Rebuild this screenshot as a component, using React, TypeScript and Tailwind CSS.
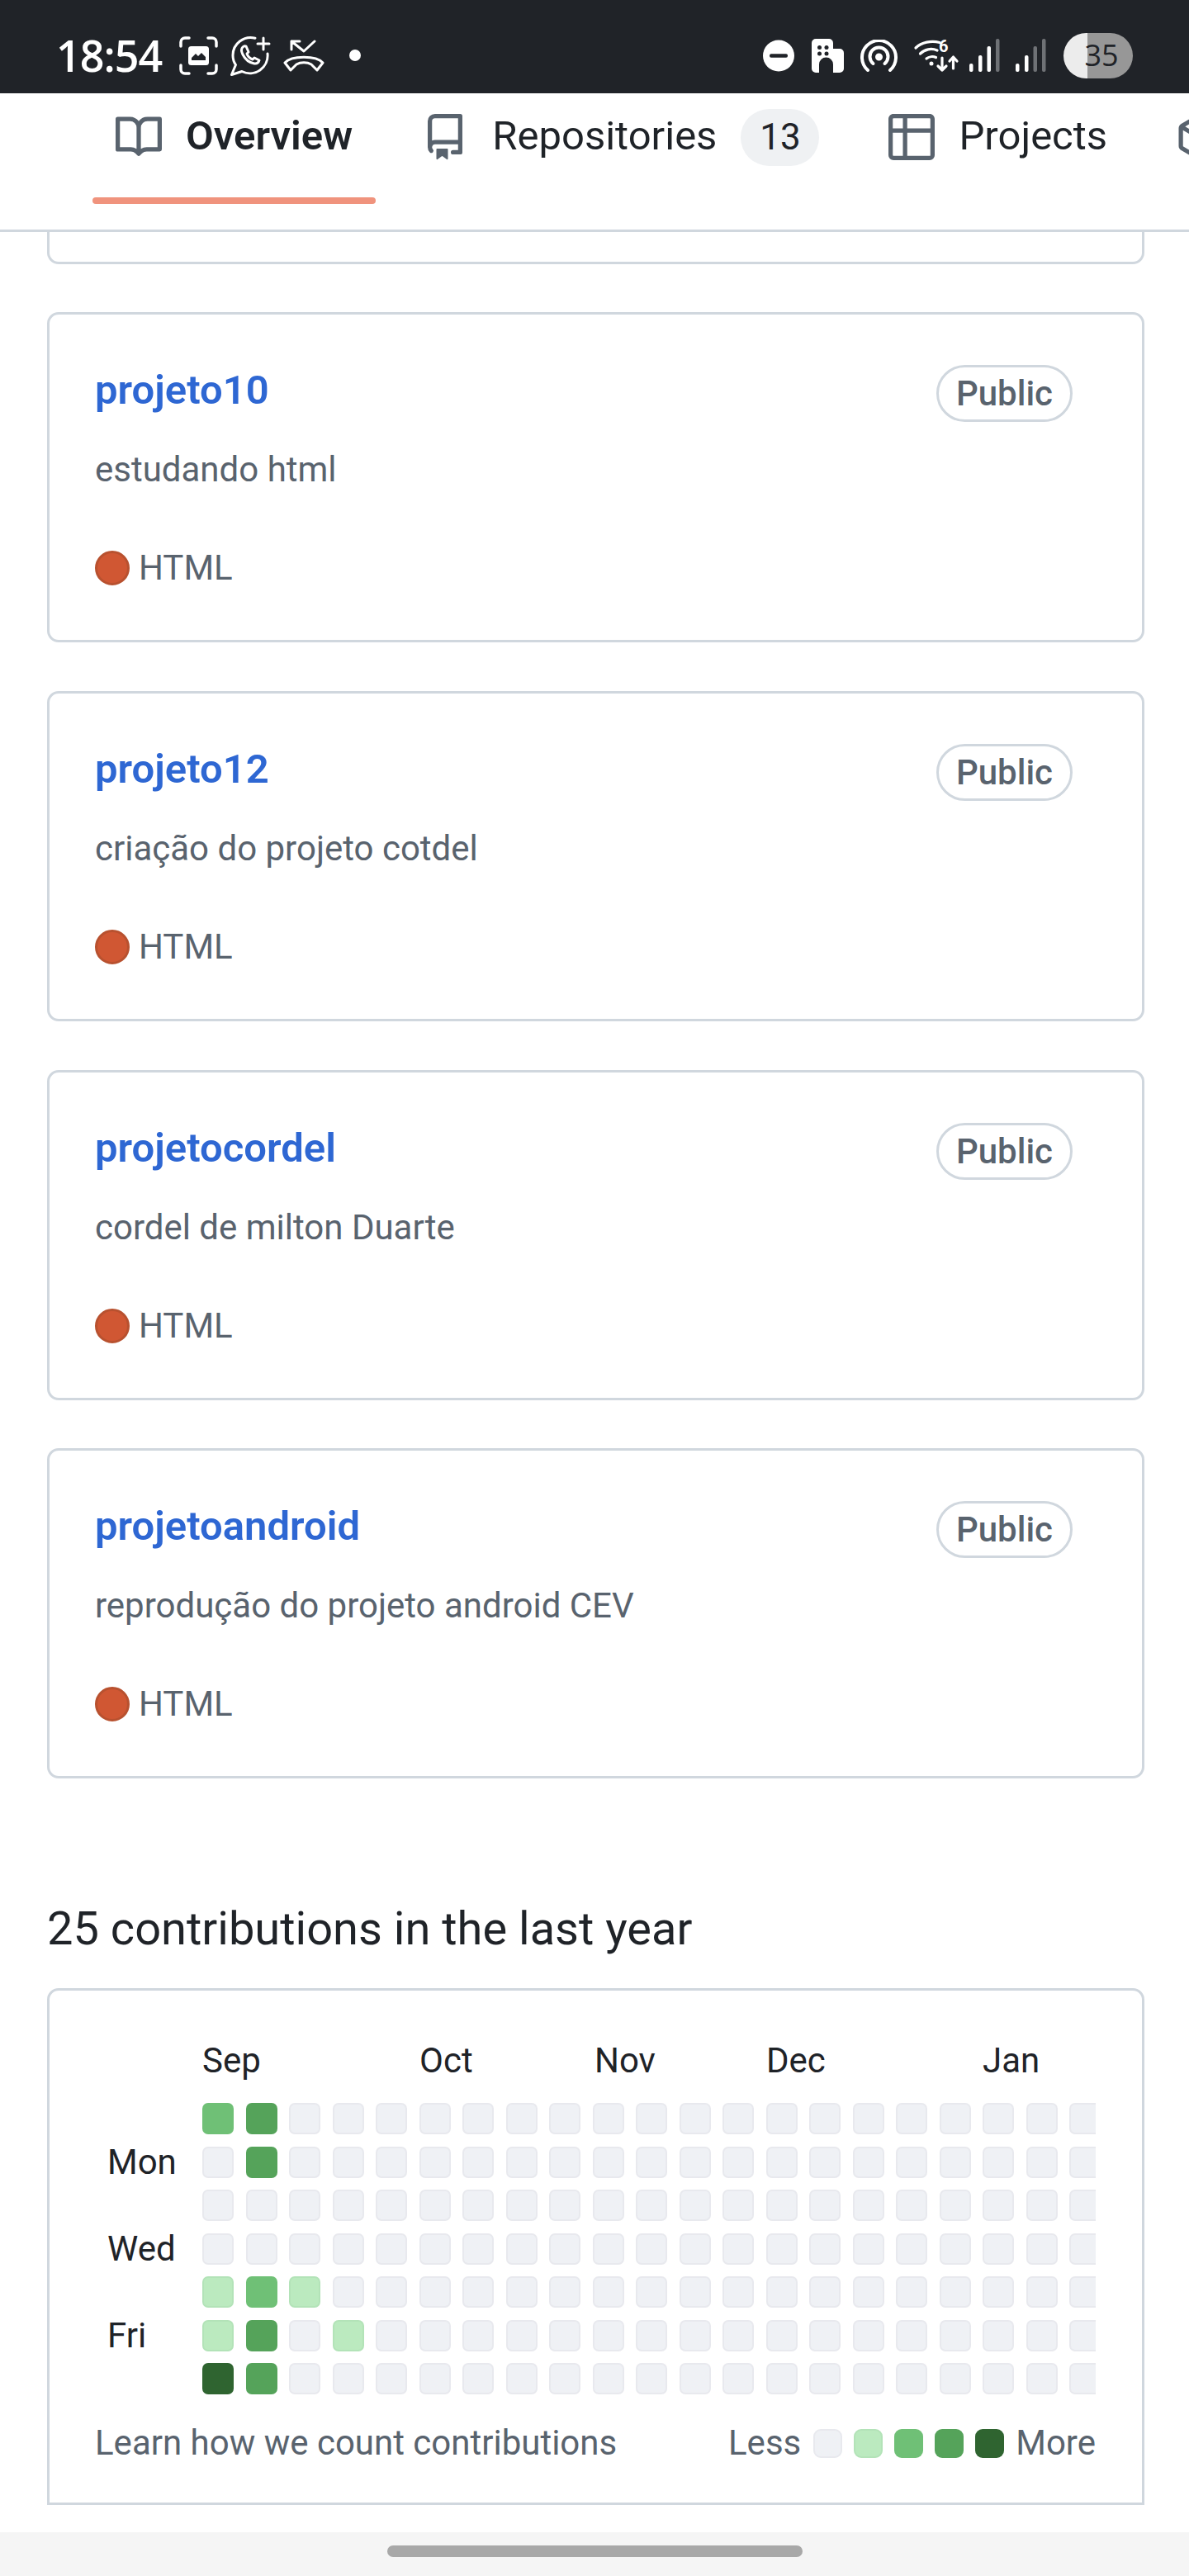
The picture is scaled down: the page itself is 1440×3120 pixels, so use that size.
import React from "react";

const FONT = "font-['Roboto','Liberation_Sans',sans-serif]";

const BookIcon = () => (
  <svg width="56" height="56" viewBox="0 0 16 16" fill="#59636e" className="shrink-0">
    <path d="M0 1.75A.75.75 0 0 1 .75 1h4.253c1.227 0 2.317.59 3 1.501A3.743 3.743 0 0 1 11.006 1h4.245a.75.75 0 0 1 .75.75v10.5a.75.75 0 0 1-.75.75h-4.507a2.25 2.25 0 0 0-1.591.659l-.622.621a.75.75 0 0 1-1.06 0l-.622-.621A2.25 2.25 0 0 0 5.258 13H.75a.75.75 0 0 1-.75-.75Zm7.251 10.324.004-5.073-.002-2.253A2.25 2.25 0 0 0 5.003 2.5H1.5v9h3.757a3.75 3.75 0 0 1 1.994.574ZM8.755 4.75l-.004 7.322a3.752 3.752 0 0 1 1.992-.572H14.5v-9h-3.495a2.25 2.25 0 0 0-2.25 2.25Z" />
  </svg>
);
const RepoIcon = () => (
  <svg width="56" height="56" viewBox="0 0 16 16" fill="#59636e" className="shrink-0">
    <path d="M2 2.5A2.5 2.5 0 0 1 4.5 0h8.75a.75.75 0 0 1 .75.75v12.5a.75.75 0 0 1-.75.75h-2.5a.75.75 0 0 1 0-1.5h1.75v-2h-8a1 1 0 0 0-.714 1.7.75.75 0 1 1-1.072 1.05A2.495 2.495 0 0 1 2 11.5Zm10.5-1h-8a1 1 0 0 0-1 1v6.708A2.486 2.486 0 0 1 4.5 9h8ZM5 12.25a.25.25 0 0 1 .25-.25h3.5a.25.25 0 0 1 .25.25v3.25a.25.25 0 0 1-.4.2l-1.45-1.087a.249.249 0 0 0-.3 0L5.4 15.7a.25.25 0 0 1-.4-.2Z" />
  </svg>
);
const TableIcon = () => (
  <svg width="56" height="56" viewBox="0 0 16 16" fill="#59636e" className="shrink-0">
    <path d="M0 1.75C0 .784.784 0 1.75 0h12.5C15.216 0 16 .784 16 1.75v12.5A1.75 1.75 0 0 1 14.25 16H1.75A1.75 1.75 0 0 1 0 14.25ZM6.5 6.5v8h7.75a.25.25 0 0 0 .25-.25V6.5Zm8-1.5V1.75a.25.25 0 0 0-.25-.25H6.5V5Zm-13 1.5v7.75c0 .138.112.25.25.25H5v-8ZM5 5V1.5H1.75a.25.25 0 0 0-.25.25V5Z" />
  </svg>
);
const PackageIcon = () => (
  <svg width="56" height="56" viewBox="0 0 16 16" fill="#59636e" className="shrink-0">
    <path d="m8.878.392 5.25 3.045c.54.314.872.89.872 1.514v6.098a1.75 1.75 0 0 1-.872 1.514l-5.25 3.045a1.75 1.75 0 0 1-1.756 0l-5.25-3.045A1.75 1.75 0 0 1 1 11.049V4.951c0-.624.332-1.201.872-1.514L7.122.392a1.75 1.75 0 0 1 1.756 0ZM7.875 1.69l-4.63 2.685L8 7.133l4.755-2.758-4.63-2.685a.248.248 0 0 0-.25 0ZM2.5 5.677v5.372c0 .09.047.171.125.216l4.625 2.683V8.432Zm6.25 8.271 4.625-2.683a.25.25 0 0 0 .125-.216V5.677L8.75 8.432Z" />
  </svg>
);

const ScreenshotIcon = () => (
  <svg width="47" height="47" viewBox="0 0 47 47" fill="none" stroke="#fff" strokeWidth="3.5" strokeLinecap="round">
    <path d="M2 12V7a5 5 0 0 1 5-5h5M35 2h5a5 5 0 0 1 5 5v5M45 35v5a5 5 0 0 1-5 5h-5M12 45H7a5 5 0 0 1-5-5v-5" />
    <rect x="11" y="12" width="25" height="23" rx="3.5" fill="#fff" stroke="none" />
    <path d="M15 29v-3l5-5 3 3 4-4 5 5v4z" fill="#202328" stroke="none" />
  </svg>
);
const WhatsappIcon = () => (
  <svg width="49" height="49" viewBox="0 0 49 49" fill="none" stroke="#fff" strokeWidth="3" strokeLinecap="round" strokeLinejoin="round">
    <path d="M30 3.2A21.5 21.5 0 0 0 3 24c0 4 1 8 3.500 11.500L1.500 47.500 14 43.500A21.500 21.500 0 0 0 45 22" />
    <path d="M15 14c-2 2-2 5 0 9 3 6 8 10 14 11 3 .5 5-1 6-4l-6-3-2 2c-3-1-6-4-7-7l2-2-3-7c-1-.5-3 0-4 1z" />
    <path d="M33 10h14M40 3v14" />
  </svg>
);
const MissedCallIcon = () => (
  <svg width="50" height="39" viewBox="0 0 50 39" fill="none" stroke="#fff" strokeWidth="3" strokeLinecap="round" strokeLinejoin="round">
    <path d="M20 2H10v10M10 2l15 12L38 2" />
    <path d="M2 28C10 19 40 19 48 28L41 37 34 30C29 27 21 27 16 30L9 37Z" />
  </svg>
);
const DndIcon = () => (
  <svg width="38" height="39" viewBox="0 0 38 39">
    <circle cx="19" cy="19.500" r="19" fill="#fff" />
    <rect x="8" y="17.300" width="22" height="4.500" rx="2" fill="#202328" />
  </svg>
);
const BuildingIcon = () => (
  <svg width="39" height="41" viewBox="0 0 39 41">
    <path d="M5 0h16a5 5 0 0 1 5 5v7h8a5 5 0 0 1 5 5v19a5 5 0 0 1-5 5h-8v-10a6 6 0 0 0-17 0v10H5a5 5 0 0 1-5-5V5a5 5 0 0 1 5-5z" fill="#fff" />
    <circle cx="9.500" cy="10.500" r="2.500" fill="#202328" />
    <circle cx="18" cy="10.500" r="2.500" fill="#202328" />
    <circle cx="9.500" cy="18" r="2.500" fill="#202328" />
    <circle cx="18" cy="18" r="2.500" fill="#202328" />
  </svg>
);
const HotspotIcon = () => (
  <svg width="45" height="39" viewBox="0 0 45 39" fill="none" stroke="#fff" strokeWidth="4" strokeLinecap="round">
    <path d="M9 37A20.500 20.500 0 1 1 36 37" />
    <path d="M15.500 29A11 11 0 1 1 29.500 29" />
    <circle cx="22.500" cy="21" r="2.500" fill="#fff" />
  </svg>
);
const WifiIcon = () => (
  <svg width="54" height="39" viewBox="0 0 54 39" fill="none" stroke="#fff" strokeWidth="3.200" strokeLinecap="round" strokeLinejoin="round" className="overflow-visible">
    <path d="M2 10C9 3 21 1 31 3.500" />
    <path d="M7.500 17C13 11.500 21 10 28 13" />
    <path d="M15 23C18 20.500 23 20 26.500 21.500" />
    <circle cx="21" cy="29" r="2.500" fill="#fff" stroke="none" />
    <text x="30" y="15" fontFamily="Roboto, sans-serif" fontWeight="700" fontSize="20" fill="#fff" stroke="none">6</text>
    <path d="M34 22v15M29 32l5 5 5-5" />
    <path d="M47.500 35V21M43 26l4.500-5 4.500 5" />
  </svg>
);
const Signal = ({ dim }: { dim: number }) => {
  const bars = [
    { x: 0, h: 10 },
    { x: 11, h: 20 },
    { x: 21.5, h: 31 },
    { x: 32, h: 40 },
  ];
  return (
    <svg width="37" height="40" viewBox="0 0 37 40">
      {bars.map((b, i) => (
        <rect key={i} x={b.x} y={40 - b.h} width="4.500" height={b.h} rx="2" fill={i >= 4 - dim ? "#6f7276" : "#fff"} />
      ))}
    </svg>
  );
};

function StatusBar() {
  return (
    <div className="flex h-[113px] shrink-0 items-center justify-between bg-[#202328] pl-[68px] pr-[68px] text-white">
      <div className="flex items-center pt-[21px]">
        <span className="w-[127px] font-['Open_Sans',sans-serif] text-[52px] leading-[52px] font-semibold tracking-[-1px] whitespace-nowrap">18:54</span>
        <div className="ml-[22px] flex items-center gap-[15px]">
          <ScreenshotIcon />
          <WhatsappIcon />
          <MissedCallIcon />
        </div>
        <span className="ml-[30px] h-[14px] w-[14px] rounded-full bg-white" />
      </div>
      <div className="flex items-center pt-[21px]">
        <DndIcon />
        <div className="ml-[21px]"><BuildingIcon /></div>
        <div className="ml-[20px]"><HotspotIcon /></div>
        <div className="ml-[20px]"><WifiIcon /></div>
        <div className="ml-[13px]"><Signal dim={1} /></div>
        <div className="ml-[19px]"><Signal dim={2} /></div>
        <div className="ml-[21px] flex h-[55px] w-[84px] items-center justify-center rounded-full bg-[linear-gradient(90deg,#ececec_35%,#979797_35%)] pl-[8px] font-['Open_Sans',sans-serif] text-[36px] font-medium text-[#202328]">
          35
        </div>
      </div>
    </div>
  );
}

function TabBar() {
  return (
    <div className={`flex h-[168px] shrink-0 gap-[28px] overflow-hidden border-b-[3px] border-[#d0d7de] bg-white pl-[112px] ${FONT}`}>
      <div className="relative flex h-[134px] shrink-0 items-center gap-[29px] px-[28px] pb-[28px]">
        <BookIcon />
        <span className="-mt-[3px] text-[49px] leading-none font-semibold text-[#1f2328]">Overview</span>
        <span className="absolute inset-x-0 bottom-0 h-[8px] rounded-full bg-[#f0937d]" />
      </div>
      <div className="flex h-[134px] shrink-0 items-center gap-[29px] px-[28px] pb-[28px]">
        <RepoIcon />
        <span className="-mt-[3px] text-[49px] leading-none text-[#1f2328]">Repositories</span>
        <span className="flex h-[69px] w-[95px] items-center justify-center rounded-full bg-[#eff1f3] text-[44px] text-[#1f2328]">13</span>
      </div>
      <div className="flex h-[134px] shrink-0 items-center gap-[29px] px-[28px] pb-[28px]">
        <TableIcon />
        <span className="-mt-[3px] text-[49px] leading-none text-[#1f2328]">Projects</span>
      </div>
      <div className="flex h-[134px] shrink-0 items-center px-[27px] pb-[28px]">
        <PackageIcon />
      </div>
    </div>
  );
}

function RepoCard({ name, desc }: { name: string; desc: string }) {
  return (
    <div className="h-[400px] rounded-[14px] border-[3px] border-[#d0d7de] pl-[55px] pr-[84px]">
      <div className="flex items-start justify-between pt-[61px]">
        <span className="-mt-[4px] text-[49px] leading-[69px] font-semibold text-[#2e67d3]">{name}</span>
        <span className="flex h-[69px] w-[165px] items-center justify-center rounded-full border-[3px] border-[#d0d7de] text-[42px] font-medium text-[#59636e]">Public</span>
      </div>
      <p className="mt-[28px] text-[42px] leading-[60px] text-[#59636e]">{desc}</p>
      <div className="mt-[59px] flex h-[60px] items-center">
        <span className="h-[42px] w-[42px] rounded-full border-[3px] border-[#b8512f] bg-[#d05733]" />
        <span className="ml-[11px] text-[42px] leading-[60px] text-[#59636e]">HTML</span>
      </div>
    </div>
  );
}

const REPOS = [
  { name: "projeto10", desc: "estudando html" },
  { name: "projeto12", desc: "criação do projeto cotdel" },
  { name: "projetocordel", desc: "cordel de milton Duarte" },
  { name: "projetoandroid", desc: "reprodução do projeto android CEV" },
];

const ACTIVE: number[][] = [
  [2, 0, 0, 0, 1, 1, 4],
  [3, 3, 0, 0, 2, 3, 3],
  [0, 0, 0, 0, 1, 0, 0],
  [0, 0, 0, 0, 0, 1, 0],
];

const LEVEL = [
  "bg-[#eff1f5] border-[2px] border-[#e8e9ee]",
  "bg-[#bbeabf] border-[2px] border-[#b3e3b8]",
  "bg-[#6fc076]",
  "bg-[#55a35a]",
  "bg-[#2f6430]",
];

const level = (row: number, col: number) => ACTIVE[col]?.[row] ?? 0;

function Contributions() {
  const rows = [0, 1, 2, 3, 4, 5, 6];
  const cols = Array.from({ length: 21 }, (_, i) => i);
  return (
    <div className="h-[626px] rounded-t-[14px] border-[3px] border-[#d0d7de] pl-[57px]">
      <div className="flex pl-[128px] pt-[61px] text-[42px] leading-[48px] text-[#1f2328]">
        <span className="w-[263px] shrink-0">Sep</span>
        <span className="w-[212px] shrink-0">Oct</span>
        <span className="w-[208px] shrink-0">Nov</span>
        <span className="w-[262px] shrink-0">Dec</span>
        <span className="shrink-0">Jan</span>
      </div>
      <div className="mt-[27px] flex">
        <div className="grid w-[128px] shrink-0 grid-rows-[repeat(7,38px)] gap-y-[14.5px] pl-[13px] text-[42px] leading-[38px] text-[#1f2328]">
          <span />
          <span>Mon</span>
          <span />
          <span>Wed</span>
          <span />
          <span>Fri</span>
          <span />
        </div>
        <div className="w-[1082px] overflow-hidden">
          <div className="grid w-max grid-cols-[repeat(21,38px)] grid-rows-[repeat(7,38px)] gap-x-[14.5px] gap-y-[14.5px]">
            {rows.map((r) =>
              cols.map((c) => <div key={`${r}-${c}`} className={`rounded-[7px] ${LEVEL[level(r, c)]}`} />)
            )}
          </div>
        </div>
      </div>
      <div className="mt-[37px] flex h-[44px] w-[1210px] items-center justify-between text-[42px] leading-[44px] text-[#59636e]">
        <span className="-ml-[2px]">Learn how we count contributions</span>
        <div className="flex items-center">
          <span>Less</span>
          <div className="ml-[15px] flex gap-[14px]">
            {LEVEL.map((cls, i) => (
              <span key={i} className={`h-[35px] w-[35px] rounded-[9px] ${cls}`} />
            ))}
          </div>
          <span className="ml-[14px]">More</span>
        </div>
      </div>
    </div>
  );
}

export default function App() {
  return (
    <div className={`flex h-[3120px] w-[1440px] flex-col overflow-hidden bg-white ${FONT}`}>
      <StatusBar />
      <TabBar />
      <main className="flex min-h-0 flex-1 flex-col overflow-hidden pl-[57px] pr-[54px]">
        <div className="h-[39px] shrink-0 rounded-b-[14px] border-x-[3px] border-b-[3px] border-[#d0d7de]" />
        <div className="mt-[58px] flex shrink-0 flex-col gap-[58.75px]">
          {REPOS.map((r) => (
            <RepoCard key={r.name} {...r} />
          ))}
        </div>
        <h2 className="mt-[147px] text-[56px] leading-[70px] font-normal text-[#1f2328]">25 contributions in the last year</h2>
        <div className="mt-[37px]"><Contributions /></div>
      </main>
      <div className="flex h-[53px] shrink-0 items-center justify-center bg-[#f5f5f5]">
        <span className="-mt-[7px] h-[14px] w-[503px] rounded-full bg-[#a8a8a8]" />
      </div>
    </div>
  );
}
